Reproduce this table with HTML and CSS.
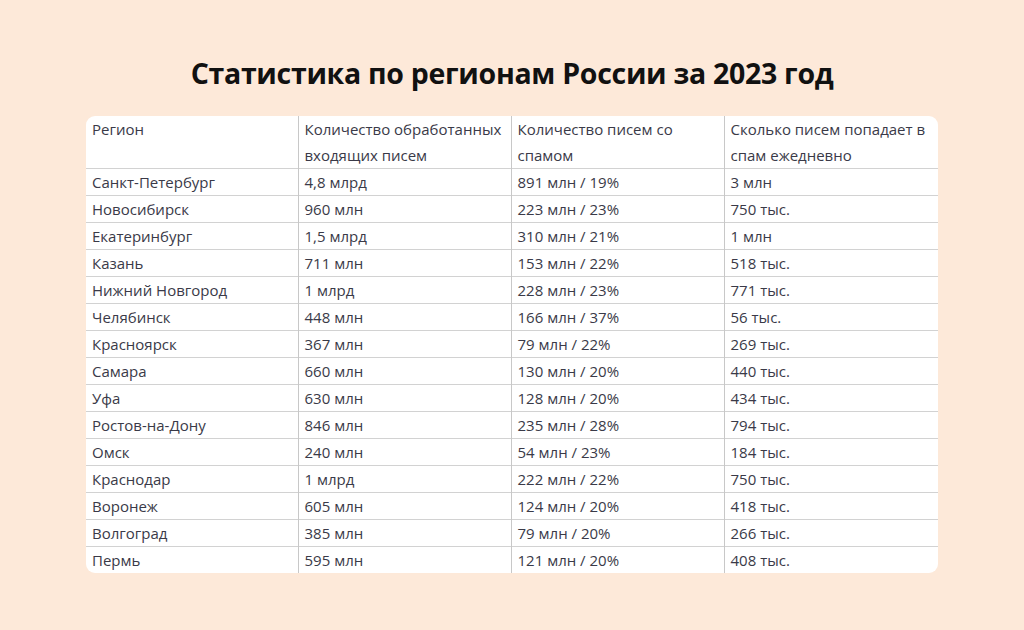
FILE: index.html
```html
<!DOCTYPE html>
<html lang="ru">
<head>
<meta charset="utf-8">
<link rel="stylesheet" href="styles.css">
</head>
<body>
<main class="page">
  <h1 class="title">Статистика по регионам России за 2023 год</h1>
  <div class="card">
    <table class="stats">
      <colgroup><col class="c1"><col class="c2"><col class="c3"><col class="c4"></colgroup>
      <thead>
        <tr><th>Регион</th><th>Количество обработанных входящих писем</th><th>Количество писем со спамом</th><th>Сколько писем попадает в спам ежедневно</th></tr>
      </thead>
      <tbody>
        <tr><td>Санкт-Петербург</td><td>4,8 млрд</td><td>891 млн / 19%</td><td>3 млн</td></tr>
        <tr><td>Новосибирск</td><td>960 млн</td><td>223 млн / 23%</td><td>750 тыс.</td></tr>
        <tr><td>Екатеринбург</td><td>1,5 млрд</td><td>310 млн / 21%</td><td>1 млн</td></tr>
        <tr><td>Казань</td><td>711 млн</td><td>153 млн / 22%</td><td>518 тыс.</td></tr>
        <tr><td>Нижний Новгород</td><td>1 млрд</td><td>228 млн / 23%</td><td>771 тыс.</td></tr>
        <tr><td>Челябинск</td><td>448 млн</td><td>166 млн / 37%</td><td>56 тыс.</td></tr>
        <tr><td>Красноярск</td><td>367 млн</td><td>79 млн / 22%</td><td>269 тыс.</td></tr>
        <tr><td>Самара</td><td>660 млн</td><td>130 млн / 20%</td><td>440 тыс.</td></tr>
        <tr><td>Уфа</td><td>630 млн</td><td>128 млн / 20%</td><td>434 тыс.</td></tr>
        <tr><td>Ростов-на-Дону</td><td>846 млн</td><td>235 млн / 28%</td><td>794 тыс.</td></tr>
        <tr><td>Омск</td><td>240 млн</td><td>54 млн / 23%</td><td>184 тыс.</td></tr>
        <tr><td>Краснодар</td><td>1 млрд</td><td>222 млн / 22%</td><td>750 тыс.</td></tr>
        <tr><td>Воронеж</td><td>605 млн</td><td>124 млн / 20%</td><td>418 тыс.</td></tr>
        <tr><td>Волгоград</td><td>385 млн</td><td>79 млн / 20%</td><td>266 тыс.</td></tr>
        <tr><td>Пермь</td><td>595 млн</td><td>121 млн / 20%</td><td>408 тыс.</td></tr>
      </tbody>
    </table>
  </div>
</main>
</body>
</html>
```
FILE: styles.css
```css
html, body {
  margin: 0;
  padding: 0;
}
body {
  background: #fde9d9;
  width: 1024px;
  height: 630px;
  overflow: hidden;
  font-family: "Open Sans", "Noto Sans", sans-serif;
}
.page {
  display: flex;
  flex-direction: column;
  align-items: center;
  padding-top: 52px;
}
.title {
  margin: 0;
  font-size: 28.5px;
  line-height: 42px;
  font-weight: 700;
  color: #111;
  letter-spacing: -0.3px;
}
.card {
  margin-top: 22px;
  width: 852px;
  background: #fff;
  border-radius: 9px;
  overflow: hidden;
}
.stats {
  width: 100%;
  border-collapse: collapse;
  table-layout: fixed;
  color: #3a3a48;
  font-size: 15px;
}
.c1 { width: 212px; }
.c2 { width: 213px; }
.c3 { width: 213px; }
.c4 { width: 214px; }
.stats th, .stats td {
  text-align: left;
  font-weight: 400;
  padding: 0 6px;
  vertical-align: top;
  border-left: 1px solid #c8c8c8;
  border-top: 1px solid #d2d2d2;
}
.stats th {
  line-height: 26px;
  border-top: none;
}
.stats td {
  line-height: 26px;
}
.stats tr > :first-child {
  border-left: none;
}
```
